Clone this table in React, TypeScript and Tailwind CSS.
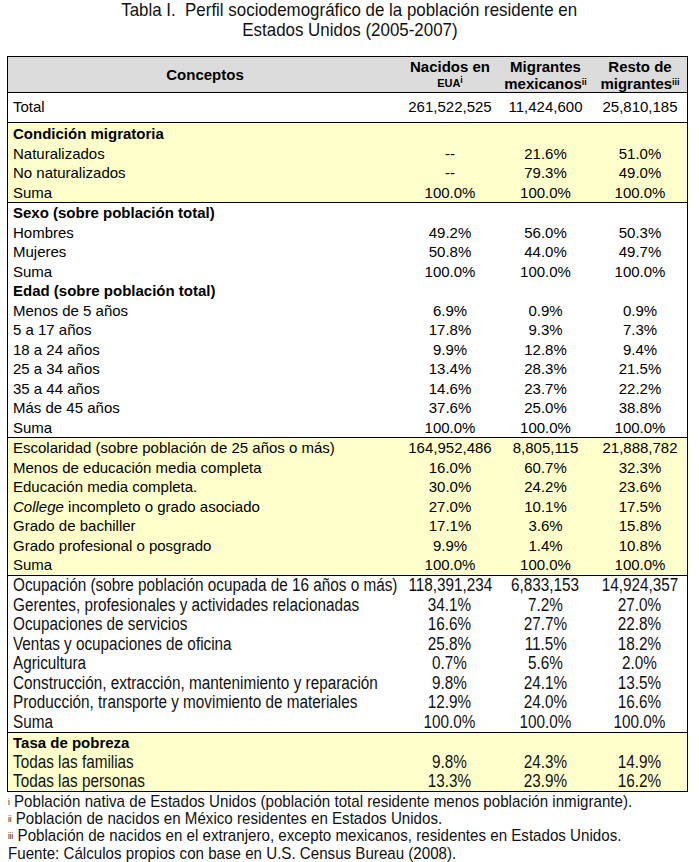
type Row = {
  label: React.ReactNode;
  bold?: boolean;
  v?: [string, string, string];
};

type Section = {
  yellow?: boolean;
  narrow?: boolean;
  pt?: string;
  rows: Row[];
};

const sections: Section[] = [
  {
    yellow: true,
    pt: "pt-[1px]",
    rows: [
      { label: "Condición migratoria", bold: true },
      { label: "Naturalizados", v: ["--", "21.6%", "51.0%"] },
      { label: "No naturalizados", v: ["--", "79.3%", "49.0%"] },
      { label: "Suma", v: ["100.0%", "100.0%", "100.0%"] },
    ],
  },
  {
    pt: "pt-0",
    rows: [
      { label: "Sexo (sobre población total)", bold: true },
      { label: "Hombres", v: ["49.2%", "56.0%", "50.3%"] },
      { label: "Mujeres", v: ["50.8%", "44.0%", "49.7%"] },
      { label: "Suma", v: ["100.0%", "100.0%", "100.0%"] },
      { label: "Edad (sobre población total)", bold: true },
      { label: "Menos de 5 años", v: ["6.9%", "0.9%", "0.9%"] },
      { label: "5 a 17 años", v: ["17.8%", "9.3%", "7.3%"] },
      { label: "18 a 24 años", v: ["9.9%", "12.8%", "9.4%"] },
      { label: "25 a 34 años", v: ["13.4%", "28.3%", "21.5%"] },
      { label: "35 a 44 años", v: ["14.6%", "23.7%", "22.2%"] },
      { label: "Más de 45 años", v: ["37.6%", "25.0%", "38.8%"] },
      { label: "Suma", v: ["100.0%", "100.0%", "100.0%"] },
    ],
  },
  {
    yellow: true,
    pt: "pt-0",
    rows: [
      { label: "Escolaridad (sobre población de 25 años o más)", v: ["164,952,486", "8,805,115", "21,888,782"] },
      { label: "Menos de educación media completa", v: ["16.0%", "60.7%", "32.3%"] },
      { label: "Educación media completa.", v: ["30.0%", "24.2%", "23.6%"] },
      {
        label: (
          <>
            <i>College</i> incompleto o grado asociado
          </>
        ),
        v: ["27.0%", "10.1%", "17.5%"],
      },
      { label: "Grado de bachiller", v: ["17.1%", "3.6%", "15.8%"] },
      { label: "Grado profesional o posgrado", v: ["9.9%", "1.4%", "10.8%"] },
      { label: "Suma", v: ["100.0%", "100.0%", "100.0%"] },
    ],
  },
  {
    narrow: true,
    pt: "pt-0",
    rows: [
      { label: "Ocupación (sobre población ocupada de 16 años o más)", v: ["118,391,234", "6,833,153", "14,924,357"] },
      { label: "Gerentes, profesionales y actividades relacionadas", v: ["34.1%", "7.2%", "27.0%"] },
      { label: "Ocupaciones de servicios", v: ["16.6%", "27.7%", "22.8%"] },
      { label: "Ventas y ocupaciones de oficina", v: ["25.8%", "11.5%", "18.2%"] },
      { label: "Agricultura", v: ["0.7%", "5.6%", "2.0%"] },
      { label: "Construcción, extracción, mantenimiento y reparación", v: ["9.8%", "24.1%", "13.5%"] },
      { label: "Producción, transporte y movimiento de materiales", v: ["12.9%", "24.0%", "16.6%"] },
      { label: "Suma", v: ["100.0%", "100.0%", "100.0%"] },
    ],
  },
  {
    yellow: true,
    narrow: true,
    pt: "pt-0",
    rows: [
      { label: "Tasa de pobreza", bold: true },
      { label: "Todas las familias", v: ["9.8%", "24.3%", "14.9%"] },
      { label: "Todas las personas", v: ["13.3%", "23.9%", "16.2%"] },
    ],
  },
];

const grid = "grid grid-cols-[394px_96px_95px_94px]";
const arial = "font-['Liberation_Sans',Arial,sans-serif] text-[15px]";
const narrow = "font-['Liberation_Sans',Arial,sans-serif] text-[18px] text-[#111]";

// Arial Narrow no está instalada: se comprime la Liberation Sans
function Squeeze({ children, center, tight }: { children: React.ReactNode; center?: boolean; tight?: boolean }) {
  return (
    <span
      className={`inline-block whitespace-nowrap ${tight ? "scale-x-[0.85]" : "scale-x-[0.89]"} ${
        center ? "origin-center" : "origin-left"
      }`}
    >
      {children}
    </span>
  );
}

function DataRow({ row, isNarrow }: { row: Row; isNarrow?: boolean }) {
  if (row.bold) {
    return (
      <div className={`${grid} h-[19.5px] items-center leading-none`}>
        <div className="pl-[5px] whitespace-nowrap font-['Liberation_Sans',Arial,sans-serif] text-[15px] font-bold text-black">
          {row.label}
        </div>
      </div>
    );
  }
  return (
    <div className={`${grid} h-[19.5px] items-center leading-none`}>
      <div className="pl-[5px] whitespace-nowrap">
        {isNarrow ? <Squeeze tight>{row.label}</Squeeze> : row.label}
      </div>
      {row.v?.map((x, i) => (
        <div key={i} className="flex justify-center whitespace-nowrap">
          {isNarrow ? (
            <Squeeze center tight>
              {x}
            </Squeeze>
          ) : (
            x
          )}
        </div>
      ))}
    </div>
  );
}

export default function App() {
  return (
    <div className="w-[699px] h-[862px] bg-white text-black overflow-hidden">
      <div className="flex flex-col items-center text-[19px] leading-[20px] font-['Liberation_Sans',Arial,sans-serif] text-[#111]">
        <Squeeze center>
          <span className="whitespace-pre">Tabla I.  Perfil sociodemográfico de la población residente en</span>
        </Squeeze>
        <Squeeze center>Estados Unidos (2005-2007)</Squeeze>
      </div>

      <div className="ml-[7px] mt-[16px] w-[681px] border border-black">
        {/* encabezado */}
        <div className={`${grid} h-[36px] bg-[#dcdcdc] border-b border-black font-['Liberation_Sans',Arial,sans-serif] font-bold text-[15px] leading-[17px]`}>
          <div className="flex items-center justify-center">Conceptos</div>
          <div className="flex flex-col items-center justify-center">
            <span>Nacidos en</span>
            <span className="text-[11px] leading-[17px]">
              EUA<sup className="text-[9px] relative -top-[4px] align-baseline">i</sup>
            </span>
          </div>
          <div className="flex flex-col items-center justify-center">
            <span>Migrantes</span>
            <span>
              mexicanos<sup className="text-[9px] relative -top-[4px] align-baseline">ii</sup>
            </span>
          </div>
          <div className="flex flex-col items-center justify-center">
            <span>Resto de</span>
            <span>
              migrantes<sup className="text-[9px] relative -top-[4px] align-baseline">iii</sup>
            </span>
          </div>
        </div>

        <div className={`${grid} h-[30px] items-center border-b border-black ${arial}`}>
          <div className="pl-[5px]">Total</div>
          <div className="text-center">261,522,525</div>
          <div className="text-center">11,424,600</div>
          <div className="text-center">25,810,185</div>
        </div>

        {sections.map((s, i) => (
          <div
            key={i}
            className={`${s.yellow ? "bg-[#ffffcc]" : "bg-white"} ${s.narrow ? narrow : arial} ${
              i < sections.length - 1 ? "border-b border-black" : ""
            } ${s.pt}`}
          >
            {s.rows.map((r, j) => (
              <DataRow key={j} row={r} isNarrow={s.narrow} />
            ))}
          </div>
        ))}
      </div>

      {/* notas */}
      <div className="pl-[8px] pt-[1px] font-['Liberation_Sans',Arial,sans-serif] text-[17px] leading-[17px] text-[#111]">
        <div className="whitespace-nowrap">
          <Squeeze>
            <sup className="text-[9px] relative -top-[2px]">i</sup> Población nativa de Estados Unidos (población total residente menos población inmigrante).
          </Squeeze>
        </div>
        <div className="whitespace-nowrap">
          <Squeeze>
            <sup className="text-[9px] relative -top-[2px]">ii</sup> Población de nacidos en México residentes en Estados Unidos.
          </Squeeze>
        </div>
        <div className="whitespace-nowrap">
          <Squeeze>
            <sup className="text-[9px] relative -top-[2px]">iii</sup> Población de nacidos en el extranjero, excepto mexicanos, residentes en Estados Unidos.
          </Squeeze>
        </div>
        <div className="whitespace-nowrap mt-[1px]">
          <Squeeze>Fuente: Cálculos propios con base en U.S. Census Bureau (2008).</Squeeze>
        </div>
      </div>
    </div>
  );
}
